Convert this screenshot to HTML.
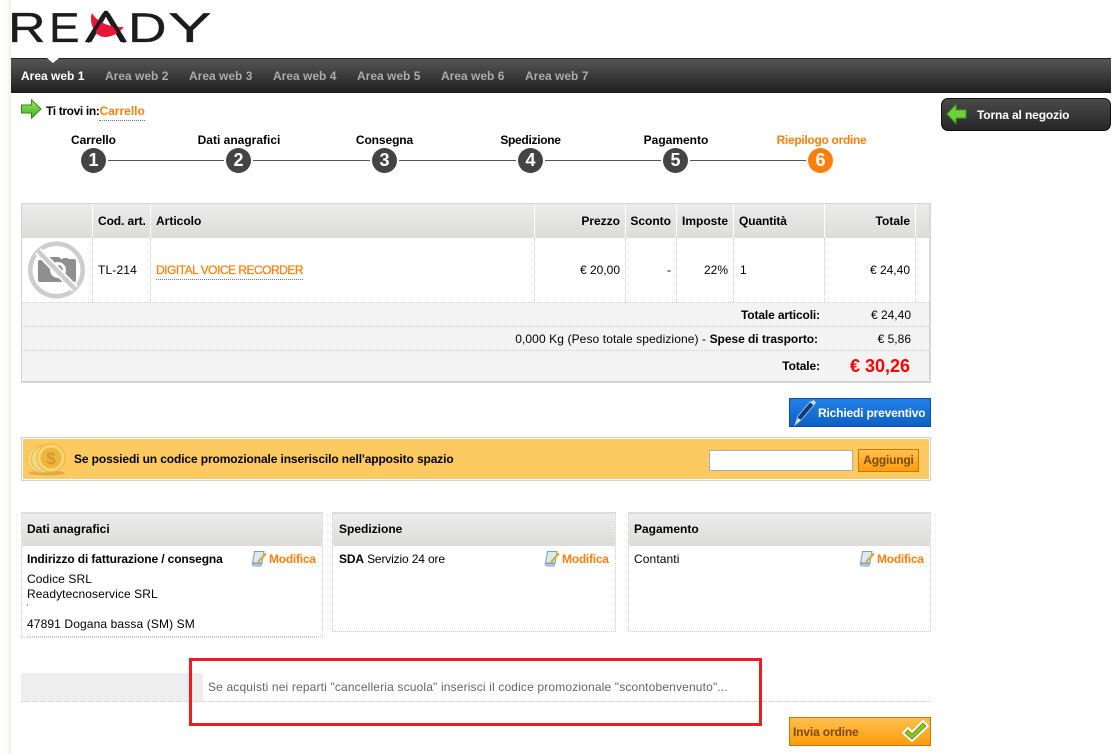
<!DOCTYPE html>
<html lang="it"><head><meta charset="utf-8"><title>Ready</title>
<style>
html,body{margin:0;padding:0;background:#fff}
#p{position:relative;width:1116px;height:754px;overflow:hidden;background:#fff;font:12px/14px "Liberation Sans",Arial,sans-serif;color:#000}
#p div,#p span.a,#p svg{position:absolute}
.t{white-space:nowrap}
.b{font-weight:bold}
.r{text-align:right}
.c{text-align:center}
.o{color:#ff7f0e}
.u{border-bottom:1px dotted #777;padding-bottom:2px}
.n{top:69px;font-weight:bold;color:#aaa;white-space:nowrap}
.s{width:25px;height:25px;top:148px;border-radius:50%;background:#444;color:#fff;font:bold 18px/25px "Liberation Sans",Arial,sans-serif;text-align:center}
.l{height:1px;top:160px;background:#555}
.sl{top:133px;width:140px;text-align:center;font-weight:bold;white-space:nowrap}
.h{background:linear-gradient(#ececec,#dcdcdb);}
.vw{top:204px;width:1px;height:34px;background:#fff}
.vd{top:238px;width:0;height:64px;border-left:1px dotted #ccc}
.hd{height:0;border-top:1px dotted #ccc}
.box{top:512px;border:1px dotted #ccc;border-top:2px solid #ddd;box-sizing:border-box;background:#fff}
.m{letter-spacing:-.25px}
</style></head><body><div id="p">

<div style="left:0;top:0;width:11px;height:754px;background:linear-gradient(90deg,#fff,#fafaf8 70%,#f0efea)"></div>

<svg style="left:0;top:0" width="230" height="50" viewBox="0 0 230 50">
<g font-family="Liberation Sans" font-size="42" fill="#1c1c1c" stroke="#1c1c1c" stroke-width=".3">
<text transform="translate(8 42) scale(1.24 1)">R</text>
<text transform="translate(49 42) scale(1.09 1)">E</text>
<text transform="translate(85 42) scale(1.49 1)">A</text>
<text transform="translate(128 42) scale(1.27 1)">D</text>
<text transform="translate(168 42) scale(1.56 1)">Y</text>
</g>
<path d="M106 19L91 43H121Z" fill="#fff"/>
<path d="M92 13C97 22 110 28 124 27C118 35 107 39 100 36C93 32 89 21 92 13Z" fill="#e8173a"/>
<path d="M87 42L105.500 12.500H106.500L125 42" fill="none" stroke="#1c1c1c" stroke-width="3.600"/>
</svg>

<div style="left:11px;top:58px;width:1100px;height:35px;background:linear-gradient(#555 0,#4b4b4b 20%,#1e1e1e 100%);border-top:1px solid #222;box-sizing:border-box"></div>
<svg style="left:46px;top:58px" width="14" height="6"><path d="M1 0H13L7 5Z" fill="#fff"/></svg>
<div class="n" style="left:21px;color:#fff">Area web 1</div>
<div class="n" style="left:105px">Area web 2</div>
<div class="n" style="left:189px">Area web 3</div>
<div class="n" style="left:273px">Area web 4</div>
<div class="n" style="left:357px">Area web 5</div>
<div class="n" style="left:441px">Area web 6</div>
<div class="n" style="left:525px">Area web 7</div>

<svg style="left:21px;top:99px" width="21" height="21"><defs><linearGradient id="g1" x1="0" y1="0" x2="0" y2="1"><stop offset="0" stop-color="#9be45b"/><stop offset="1" stop-color="#3cb521"/></linearGradient></defs><path d="M.5 6H10.5V.8L20 10 10.500 19.200V14H.5Z" fill="url(#g1)" stroke="#2d8a17"/></svg>
<div class="t b" style="left:46px;top:104px"><span style="letter-spacing:-.36px">Ti trovi in:</span><span class="o u" style="letter-spacing:0">Carrello</span></div>

<div class="sl" style="left:23.500px;letter-spacing:-.05px">Carrello</div>
<div class="sl" style="left:169px">Dati anagrafici</div>
<div class="sl" style="left:314.500px;letter-spacing:-.1px">Consegna</div>
<div class="sl" style="left:460.500px;letter-spacing:-.3px">Spedizione</div>
<div class="sl" style="left:606px">Pagamento</div>
<div class="sl o" style="left:751.500px;letter-spacing:-.3px">Riepilogo ordine</div>
<div class="l" style="left:108px;width:116px"></div>
<div class="l" style="left:253px;width:117px"></div>
<div class="l" style="left:399px;width:117px"></div>
<div class="l" style="left:545px;width:116px"></div>
<div class="l" style="left:690px;width:116px"></div>
<div class="s" style="left:81px">1</div>
<div class="s" style="left:226px">2</div>
<div class="s" style="left:372px">3</div>
<div class="s" style="left:518px">4</div>
<div class="s" style="left:663px">5</div>
<div class="s" style="left:808px;background:#ff7f0e">6</div>

<div style="left:941px;top:98px;width:170px;height:33px;box-sizing:border-box;border:1px solid #111;border-radius:7px;background:linear-gradient(#4a4a4a,#262626)"></div>
<svg style="left:946px;top:103px" width="21" height="22"><path d="M20 7H10V1.500L1 11 10 20.500V15H20Z" fill="#6fd13a" stroke="#3d9a1f"/></svg>
<div class="t b" style="left:977px;top:108px;color:#fff;letter-spacing:-.13px">Torna al negozio</div>

<!-- table -->
<div style="left:21px;top:203px;width:910px;height:180px;box-sizing:border-box;border:1px solid #d4d4d4;border-bottom:2px solid #d4d4d4;border-right:2px solid #d8d8d8;background:#fff"></div>
<div class="h" style="left:22px;top:204px;width:907px;height:34px"></div>
<div style="left:22px;top:303px;width:907px;height:78px;background:#f3f3f3"></div>
<div class="vw" style="left:92px"></div><div class="vw" style="left:150px"></div><div class="vw" style="left:534px"></div><div class="vw" style="left:625px"></div><div class="vw" style="left:676px"></div><div class="vw" style="left:733px"></div><div class="vw" style="left:824px"></div><div class="vw" style="left:915px"></div>
<div class="vd" style="left:92px"></div><div class="vd" style="left:150px"></div><div class="vd" style="left:534px"></div><div class="vd" style="left:625px"></div><div class="vd" style="left:676px"></div><div class="vd" style="left:733px"></div><div class="vd" style="left:824px"></div><div class="vd" style="left:915px"></div>
<div class="hd" style="left:22px;top:302px;width:907px"></div>
<div class="hd" style="left:22px;top:326px;width:907px"></div>
<div class="hd" style="left:22px;top:350px;width:907px"></div>

<div class="t b" style="left:98px;top:214px;letter-spacing:-.1px">Cod. art.</div>
<div class="t b" style="left:156px;top:214px">Articolo</div>
<div class="t b r" style="left:540px;top:214px;width:80px">Prezzo</div>
<div class="t b r" style="left:626px;top:214px;width:45px">Sconto</div>
<div class="t b r" style="left:677px;top:214px;width:51px">Imposte</div>
<div class="t b" style="left:739px;top:214px;letter-spacing:-.1px">Quantità</div>
<div class="t b r" style="left:830px;top:214px;width:80px">Totale</div>

<svg style="left:28px;top:241px" width="58" height="58" viewBox="0 0 58 58">
<path d="M10 21q0-2 2-2h7l3-3h9l2 2h2v-1h5v1h6q2 0 2 2v19q0 2-2 2H12q-2 0-2-2Z" fill="#8f8f8f"/>
<circle cx="30" cy="29" r="8" fill="#fff"/><circle cx="30" cy="29" r="5" fill="#8f8f8f"/>
<circle cx="28.500" cy="29" r="26.200" fill="none" stroke="#cdcdcd" stroke-width="4.500"/>
<path d="M10 10L47 48" stroke="#fff" stroke-width="8"/><path d="M10 10L47 48" stroke="#cdcdcd" stroke-width="4.500"/>
</svg>

<div class="t" style="left:98px;top:263px;letter-spacing:.15px">TL-214</div>
<div class="t" style="left:156px;top:263px"><span class="o u" style="letter-spacing:-.5px;-webkit-text-stroke:.25px #ff7f0e">DIGITAL VOICE RECORDER</span></div>
<div class="t r" style="left:540px;top:263px;width:80px">€ 20,00</div>
<div class="t r" style="left:626px;top:263px;width:45px">-</div>
<div class="t r" style="left:677px;top:263px;width:51px">22%</div>
<div class="t" style="left:740px;top:263px">1</div>
<div class="t r" style="left:830px;top:263px;width:80px">€ 24,40</div>

<div class="t b r" style="left:520px;top:308px;width:300px;letter-spacing:-.13px">Totale articoli:</div>
<div class="t r" style="left:830px;top:308px;width:81px">€ 24,40</div>
<div class="t r" style="left:400px;top:332px;width:418px"><span style="letter-spacing:.1px">0,000 Kg (Peso totale spedizione) - </span><b style="letter-spacing:-.05px">Spese di trasporto:</b></div>
<div class="t r" style="left:830px;top:332px;width:81px">€ 5,86</div>
<div class="t b r" style="left:520px;top:359px;width:300px;letter-spacing:-.1px">Totale:</div>
<div class="t b r" style="left:809px;top:356px;width:101px;font-size:18px;line-height:21px;color:#f00">€ 30,26</div>

<!-- richiedi -->
<div style="left:789px;top:398px;width:142px;height:29px;box-sizing:border-box;border:1px solid #0c4f96;background:linear-gradient(#2182e6,#0f5fc4)"></div>
<svg style="left:793px;top:399px" width="24" height="27" viewBox="0 0 24 27"><path d="M2 26L5 17 17 3 21 6 9 20Z" fill="#0e3c80" stroke="#bcd" stroke-width=".8"/><path d="M2 26L5 19 8 21Z" fill="#dde"/><path d="M17 3L21 1 23 4 21 6Z" fill="#cdd"/></svg>
<div class="t b" style="left:818px;top:406px;color:#fff;letter-spacing:-.17px">Richiedi preventivo</div>

<!-- promo -->
<div style="left:21px;top:437px;width:910px;height:44px;box-sizing:border-box;border:1px solid #d2d2d2;background:#fdca62;box-shadow:inset 0 0 0 1px #fff"></div>
<svg style="left:24px;top:441px" width="46" height="36" viewBox="0 0 46 36">
<ellipse cx="23" cy="32" rx="18" ry="2.500" fill="#c9963a" opacity=".6"/>
<circle cx="17" cy="18" r="13.500" fill="#f5d77f" stroke="#eebf4e"/>
<circle cx="21" cy="18" r="13.500" fill="#f5d77f" stroke="#e8b748"/>
<circle cx="27" cy="17" r="14" fill="#f7d675" stroke="#e9b440"/>
<circle cx="27" cy="17" r="10.500" fill="#edb63f"/>
<text x="27" y="23" text-anchor="middle" font-family="Liberation Sans" font-weight="bold" font-size="17" fill="#d49a2c">$</text>
</svg>
<div class="t b" style="left:74px;top:452px;letter-spacing:-.12px">Se possiedi un codice promozionale inseriscilo nell'apposito spazio</div>
<div style="left:709px;top:450px;width:144px;height:21px;box-sizing:border-box;border:1px solid #abadb3;background:#fff"></div>
<div class="c b" style="left:858px;top:449px;width:61px;height:23px;box-sizing:border-box;border:1px solid #c87a00;background:linear-gradient(#ffc04f,#ff9c0c);color:#7c4a00;line-height:21px;letter-spacing:-.2px">Aggiungi</div>

<!-- boxes -->
<div class="box" style="left:21px;width:302px;height:126px"></div>
<div class="box" style="left:332px;width:284px;height:120px"></div>
<div class="box" style="left:628px;width:303px;height:120px"></div>
<div class="h" style="left:22px;top:514px;width:300px;height:32px"></div>
<div class="h" style="left:333px;top:514px;width:282px;height:32px"></div>
<div class="h" style="left:629px;top:514px;width:301px;height:32px"></div>
<div class="t b" style="left:27px;top:522px">Dati anagrafici</div>
<div class="t b" style="left:339px;top:522px">Spedizione</div>
<div class="t b" style="left:634px;top:522px">Pagamento</div>

<div class="t b" style="left:27px;top:552px;letter-spacing:-.12px">Indirizzo di fatturazione / consegna</div>
<div class="t" style="left:27px;top:572px;letter-spacing:.1px">Codice SRL</div>
<div class="t" style="left:27px;top:587px;letter-spacing:.1px">Readytecnoservice SRL</div>
<div style="left:27px;top:604px;width:1px;height:2px;background:#d98a3a"></div>
<div class="t" style="left:27px;top:617px;letter-spacing:.12px">47891 Dogana bassa (SM) SM</div>
<div class="hd" style="left:27px;top:636px;width:290px"></div>

<svg style="left:251px;top:550px" width="17" height="17" viewBox="0 0 17 17"><path d="M3.500 1.500H13L11 13H1.500Z" fill="#dbe9f5" stroke="#7f9db5"/><path d="M1 13.500Q1 16 3 16H10L11 13.500Z" fill="#b6cbdb" stroke="#7f9db5" stroke-width=".7"/><path d="M7 12L15 3.500" stroke="#e6a928" stroke-width="2.200"/></svg>
<div class="t b o m" style="left:269px;top:552px">Modifica</div>
<div class="t" style="left:339px;top:552px;letter-spacing:-.15px"><b>SDA</b> Servizio 24 ore</div>
<svg style="left:544px;top:550px" width="17" height="17" viewBox="0 0 17 17"><path d="M3.500 1.500H13L11 13H1.500Z" fill="#dbe9f5" stroke="#7f9db5"/><path d="M1 13.500Q1 16 3 16H10L11 13.500Z" fill="#b6cbdb" stroke="#7f9db5" stroke-width=".7"/><path d="M7 12L15 3.500" stroke="#e6a928" stroke-width="2.200"/></svg>
<div class="t b o m" style="left:562px;top:552px">Modifica</div>
<div class="t" style="left:634px;top:552px;letter-spacing:.1px">Contanti</div>
<svg style="left:859px;top:550px" width="17" height="17" viewBox="0 0 17 17"><path d="M3.500 1.500H13L11 13H1.500Z" fill="#dbe9f5" stroke="#7f9db5"/><path d="M1 13.500Q1 16 3 16H10L11 13.500Z" fill="#b6cbdb" stroke="#7f9db5" stroke-width=".7"/><path d="M7 12L15 3.500" stroke="#e6a928" stroke-width="2.200"/></svg>
<div class="t b o m" style="left:877px;top:552px">Modifica</div>

<!-- bottom -->
<div style="left:21px;top:673px;width:182px;height:28px;background:#eee"></div>
<div class="hd" style="left:21px;top:701px;width:910px"></div>
<div class="t" style="left:208px;top:680px;color:#666;letter-spacing:.155px">Se acquisti nei reparti "cancelleria scuola" inserisci il codice promozionale "scontobenvenuto"...</div>
<div style="left:189px;top:658px;width:573px;height:68px;box-sizing:border-box;border:3px solid #ed1c24"></div>

<div style="left:789px;top:717px;width:142px;height:29px;box-sizing:border-box;border:1px solid #c87a00;background:linear-gradient(#ffc04f,#ff9c0c)"></div>
<div class="t b" style="left:793px;top:725px;color:#7c4a00;letter-spacing:-.15px">Invia ordine</div>
<svg style="left:901px;top:719px" width="28" height="24" viewBox="0 0 28 24"><path d="M2 14L7 9 11 13 22 2 27 7 11 22Z" fill="#8fc31f" stroke="#fff" stroke-width="2"/><path d="M4 14L7 11 11 15 22 4 25 7 11 20Z" fill="none" stroke="#5c8a10" stroke-width=".7"/></svg>
</div></body></html>
